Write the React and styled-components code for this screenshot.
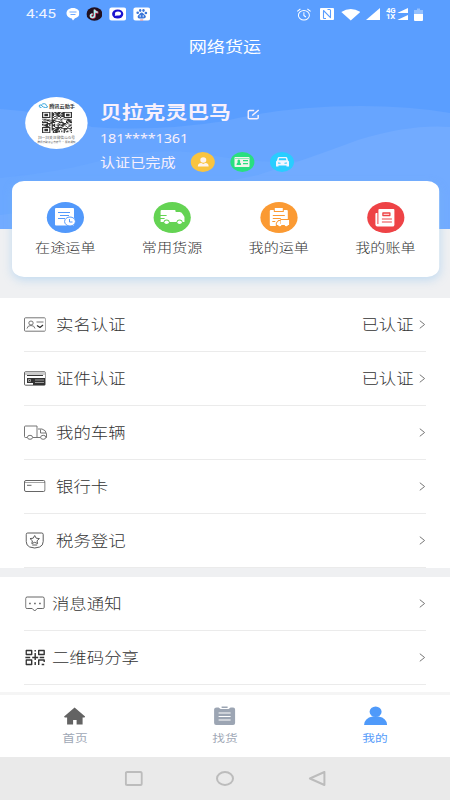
import React from 'react'
import styled, { createGlobalStyle } from 'styled-components'

const STRETCH = 1.2

const GlobalStyles = createGlobalStyle`
  * {
    box-sizing: border-box;
  }

  body {
    margin: 0;
    overflow: hidden;
    background: #eff0f2;
  }
`

const Screen = styled.div`
  display: flex;
  flex-direction: column;
  width: 375px;
  height: 800px;
  overflow: hidden;
  transform: scaleX(${STRETCH});
  transform-origin: 0 0;
  background: #eff0f2;
  color: #333;
  font-family: 'Noto Sans CJK SC', sans-serif;
  font-weight: 300;
  white-space: nowrap;
`

const Hero = styled.header`
  position: relative;
  flex: none;
  height: 229px;
  background: #5a9eff;
  color: #f8f0fb;
`

const Waves = styled.svg`
  position: absolute;
  inset: 0;
  width: 100%;
  height: 100%;
`

const HeroContent = styled.div`
  position: relative;
`

const StatusBar = styled.div`
  display: flex;
  align-items: center;
  justify-content: space-between;
  height: 28px;
  padding: 0 22.3px 0 21.7px;
  color: #fff;
`

const StatusGroup = styled.div`
  display: flex;
  align-items: center;
  gap: ${p => p.$gap}px;
`

const Clock = styled.span`
  width: 27.5px;
  font: 13px/20px Roboto, sans-serif;
  color: #eef4ff;
`

const Network = styled.span`
  margin-right: -3.3px;
  font: bold 6.5px/6.5px Roboto, sans-serif;
`

const Title = styled.h1`
  margin: 0;
  font-size: 15.1px;
  font-weight: 400;
  line-height: 34px;
  text-align: center;
  color: #fff;
`

const Profile = styled.section`
  display: flex;
  gap: 10px;
  padding: 35px 0 0 20.8px;
`

const Avatar = styled.div`
  display: flex;
  flex-direction: column;
  align-items: center;
  width: 52.5px;
  height: 52px;
  overflow: hidden;
  border-radius: 50%;
  background: #fff;
  color: #333;
`

const AvatarBrand = styled.div`
  display: flex;
  align-items: center;
  gap: 1px;
  height: 15px;
  padding-top: 2px;
  font-size: 4.3px;
  font-weight: 700;
  line-height: 6px;
`

const AvatarNote = styled.div`
  margin-top: ${p => p.$top}px;
  font-size: ${p => p.$size}px;
  font-weight: 400;
  line-height: 4px;
  color: #555;
`

const Details = styled.div`
  display: flex;
  flex-direction: column;
`

const Name = styled.div`
  display: flex;
  align-items: center;
  gap: 13.8px;
  height: 27px;
  font-size: 18.2px;
  font-weight: 700;

  svg {
    margin-top: 6px;
  }
`

const Phone = styled.div`
  font: 12px/29px 'Noto Sans', sans-serif;
  letter-spacing: -0.1px;
`

const Verified = styled.div`
  display: flex;
  align-items: center;
  height: 17px;
  font-size: 12.6px;
  font-weight: 400;
`

const Badges = styled.div`
  display: flex;
  gap: 13.1px;
  margin-left: 12.7px;
`

const Circle = styled.span`
  display: flex;
  align-items: center;
  justify-content: center;
  width: ${p => p.$size}px;
  height: ${p => p.$size}px;
  border-radius: 50%;
  background: ${p => p.$color};
`

const Card = styled.nav`
  position: relative;
  display: grid;
  flex: none;
  grid-template-columns: repeat(4, 1fr);
  height: 96px;
  margin: -48px 9.3px 21px 10px;
  border-radius: 10px;
  background: #fff;
  box-shadow: 0 3px 9px rgba(120, 185, 240, 0.38);
`

const Shortcut = styled.div`
  display: flex;
  flex-direction: column;
  align-items: center;
  padding-top: 21px;
  font-size: 12.6px;
  line-height: 28px;
`

const List = styled.section`
  flex: ${p => (p.$fill ? 1 : 'none')};
  margin-bottom: ${p => (p.$fill ? 0 : 8.5)}px;
  padding: 0 20px;
  background: #fff;
`

const Row = styled.div`
  display: flex;
  align-items: center;
  height: 54.1px;
  border-bottom: 1px solid #ebebeb;
  font-size: 14.5px;
`

const RowIcon = styled.span`
  display: flex;
  flex: none;
  width: ${p => p.$width}px;
  padding-left: ${p => p.$inset}px;
`

const RowLabel = styled.span`
  flex: 1;
  padding-bottom: 2px;
`

const RowValue = styled.span`
  margin-right: 4.5px;
  padding-bottom: 2px;
`

const TabBar = styled.nav`
  display: grid;
  flex: none;
  grid-template-columns: repeat(3, 1fr);
  height: 65px;
  background: #fff;
  border-top: 3px solid #f5f5f5;
`

const Tab = styled.div`
  display: flex;
  flex-direction: column;
  align-items: center;
  padding-top: 11px;
  color: ${p => (p.$active ? '#569bfa' : '#a0a8b6')};
  font-size: 10.6px;
  font-weight: 400;
  line-height: 24px;
`

const SystemBar = styled.div`
  display: flex;
  flex: none;
  align-items: center;
  justify-content: center;
  gap: 61.5px;
  height: 43px;
  background: #eaeaea;
`

// drawn in stretched units, so strokes keep one thickness
const Icon = ({ w, h, color = '#4a4a4a', filled, stroke = 1, children }) => (
  <svg
    width={w / STRETCH}
    height={h}
    viewBox={`0 0 ${w} ${h}`}
    preserveAspectRatio='none'
    fill={filled ? color : 'none'}
    stroke={filled ? 'none' : color}
    strokeWidth={stroke}
    strokeLinejoin='round'
    style={{ display: 'block', flex: 'none' }}
  >
    {children}
  </svg>
)

const qrCells = []
for (let y = 0; y < 25; y++) {
  for (let x = 0; x < 25; x++) {
    const cx = x > 17 ? 24 - x : x
    const cy = y > 17 ? 24 - y : y
    const corner = cx < 8 && cy < 8 && !(x > 17 && y > 17)
    const ring = Math.max(Math.abs(cx - 3), Math.abs(cy - 3))
    const on = corner ? ring < 2 || ring === 3 : (x * 7 + y * 13 + x * y * 5 + ((x * x) ^ (y * 3))) % 7 < 4
    if (on) qrCells.push(`M${x} ${y}h1v1h-1z`)
  }
}

const Chevron = () => (
  <Icon w={7} h={9} color='#777'>
    <path d='M1 .7l4.800 3.800L1 8.300' />
  </Icon>
)

const shortcuts = [
  {
    label: '在途运单',
    color: '#5299fb',
    icon: (
      <Icon w={22} h={19} color='#fff' filled>
        <path d='M2 0h17a1 1 0 0 1 1 1v16.500H2a1 1 0 0 1-1-1V1a1 1 0 0 1 1-1z' />
        <path d='M4 4.500h12M6 7.500h9M4 10.500h7' stroke='#5299fb' />
        <ellipse cx='16' cy='13.500' rx='5.400' ry='4.500' stroke='#5299fb' />
        <path d='M15.500 11v3h3' fill='none' stroke='#5299fb' />
      </Icon>
    )
  },
  {
    label: '常用货源',
    color: '#64d353',
    icon: (
      <Icon w={26} h={15} color='#fff' filled>
        <path d='M2 0h13q1 0 1 1v1h4q2 0 3 2l2 3v5h-2a3 2.500 0 0 0-6 0H10a3 2.500 0 0 0-6 0H1V9h4V8H1V6h6V5H1V1q0-1 1-1z' />
        <ellipse cx='7' cy='12.300' rx='2.200' ry='1.800' />
        <ellipse cx='20' cy='12.300' rx='2.200' ry='1.800' />
      </Icon>
    )
  },
  {
    label: '我的运单',
    color: '#fb9a33',
    icon: (
      <Icon w={21} h={20} color='#fff' filled>
        <path d='M2 2h3v2h10V2h3q1 0 1 1v15H2q-1 0-1-1V3q0-1 1-1z' />
        <path d='M6 0h8v3H6z' />
        <path d='M4 7.500h12M4 10.500h8M3.500 13.500h3' stroke='#fb9a33' />
        <path d='M7 18v-3l2.500-3h2V11H21v7.500z' fill='#fb9a33' />
        <path d='M12 12h8q.5 0 .5.500V17H8v-2l2-2h1.500v3h.5z' />
        <ellipse cx='11' cy='17' rx='1.600' ry='1.300' />
        <ellipse cx='17.500' cy='17' rx='1.600' ry='1.300' />
      </Icon>
    )
  },
  {
    label: '我的账单',
    color: '#ee4346',
    icon: (
      <Icon w={21} h={18} color='#fff' filled>
        <path d='M5 0h14q1 0 1 1v15q0 1.500-2 1.500H3q-2 0-2-2V5q0-1 1-1h1v11h1V1q0-1 1-1z' />
        <path d='M8.500 4h7v2.500h-7z' fill='none' stroke='#ee4346' strokeWidth='1.300' />
        <path d='M7.500 10h10M7.500 13h10' stroke='#ee4346' strokeWidth='1.200' />
      </Icon>
    )
  }
]

const account = [
  {
    label: '实名认证',
    value: '已认证',
    icon: (
      <Icon w={22} h={15} color='#666' stroke={0.9}>
        <rect x='.5' y='.8' width='21' height='13.400' rx='1' />
        <ellipse cx='7' cy='6' rx='2.200' ry='2' />
        <path d='M3 11.500q.5-3 4-3t4 3M12.500 5h7' />
        <path d='M13 8.500l3 2L19 8' stroke='#333' strokeWidth='1.200' />
      </Icon>
    )
  },
  {
    label: '证件认证',
    value: '已认证',
    icon: (
      <Icon w={22} h={15} stroke={0.9}>
        <rect x='.5' y='.8' width='21' height='13.400' rx='1' />
        <path d='M1 2h20v2H1z' fill='#ccc' stroke='none' />
        <path d='M3 4.500h16' stroke='#222' />
        <path d='M3 7h18v7H9v-2H3z' fill='#333' stroke='none' />
        <path d='M4.500 8.500h2v2h-2zM11 9h9M11 11.500h9' stroke='#bbb' strokeWidth='.8' />
      </Icon>
    )
  },
  {
    label: '我的车辆',
    icon: (
      <Icon w={24} h={15} color='#666' stroke={0.9}>
        <path d='M3 12.500H1.500q-1 0-1-1V2q0-1 1-1H13v11.500H9M14 4h4q4 1 4.500 5v3.500H22M16.500 12.500H13M16.500 4.500V8H22' />
        <ellipse cx='6' cy='12.300' rx='2.600' ry='2' />
        <ellipse cx='19.200' cy='12.300' rx='2.600' ry='2' />
      </Icon>
    )
  },
  {
    label: '银行卡',
    icon: (
      <Icon w={22} h={15} color='#555' stroke={0.9}>
        <rect x='.5' y='1.500' width='20.500' height='11' rx='1.500' />
        <path d='M1 3.500h20' opacity='.6' />
        <path d='M3 6.300h4.500' />
      </Icon>
    )
  },
  {
    label: '税务登记',
    inset: 1.4,
    icon: (
      <Icon w={19} h={17} stroke={0.9}>
        <path d='M2.500 1h14q1.500 0 1.500 1.500v7q0 4-3.500 5.500-5 2-10 0Q1 13.500 1 9.500v-7Q1 1 2.500 1z' />
        <path d='M9.500 3.500l1.500 2.700 3.200.4L11.800 8.800l.6 2.800-2.900-1.300-2.900 1.300.6-2.800-2.400-2.200 3.200-.4zM7 13h5' />
      </Icon>
    )
  }
]

const tools = [
  {
    label: '消息通知',
    icon: (
      <Icon w={20} h={16} color='#555' stroke={0.9}>
        <path d='M2 1h15.500q1.500 0 1.500 1.500v9q0 1-1.500 1H12L9.500 15 7 12.500H2q-1.500 0-1.500-1v-9Q.5 1 2 1z' />
        <path d='M4 7.500h1.500M9 7.500h1.500M14 7.500h1.500' strokeWidth='1.300' />
      </Icon>
    )
  },
  {
    label: '二维码分享',
    icon: (
      <Icon w={20} h={17} color='#333' stroke={1.4}>
        <path d='M1 1.500h5.500v4H1zM13.500 1.500H19v4h-5.500zM1 11h5.500v4.500H1zM10 1v1.500M10 4v7M7 8.500h6M14.500 8.500H19M0 8.500h5M10 13v3M13.500 16v-5H19v2M16.500 15.500H19' />
      </Icon>
    )
  }
]

const MenuRow = ({ item, width, inset = 0 }) => (
  <Row>
    <RowIcon $width={width} $inset={item.inset || inset}>{item.icon}</RowIcon>
    <RowLabel>{item.label}</RowLabel>
    {item.value && <RowValue>{item.value}</RowValue>}
    <Chevron />
  </Row>
)

const App = () => (
  <>
    <GlobalStyles />
    <Screen>
      <Hero>
        <Waves viewBox='0 0 450 229' preserveAspectRatio='none'>
          <path d='M0 109Q45 111 92 127Q155 132 225 121Q285 106 360 106Q410 106 450 113V229H0z' fill='#67a5ff' />
          <path d='M0 178Q55 173 100 161Q160 145 210 155Q260 164 300 161V229H0z' fill='#6ba8ff' />
          <path d='M0 229V215Q160 195 258 175Q310 158 358 140Q410 124 450 127V229z' fill='#72abff' />
        </Waves>
        <HeroContent>
          <StatusBar>
            <StatusGroup $gap={5.6}>
              <Clock>4:45</Clock>
              <Icon w={14} h={14} color='#fff' filled>
                <path d='M7 1C3 1 .5 3.300.5 6.200S3 11 5.500 11.300L7 13.500l2-2.300c2.700-.5 4.500-2.400 4.500-5C13.500 3.300 11 1 7 1z' />
                <path d='M3.500 5h7M4.500 7.500h5' stroke='#5a9eff' strokeWidth='.9' />
              </Icon>
              <Icon w={16} h={14} color='#21101f' filled>
                <ellipse cx='8' cy='7' rx='8' ry='6.700' />
                <path d='M8.500 2.800v6.200a2 1.700 0 1 1-2-1.700M8.500 3q.5 2.500 3.500 2.700' fill='none' stroke='#ef4c6c' strokeWidth='2' />
                <path d='M8 2.500v6.200a2 1.700 0 1 1-2-1.700M8 3q.5 2 3.300 2.300' fill='none' stroke='#aff5f3' strokeWidth='1.500' />
              </Icon>
              <Icon w={17} h={14} color='#fff' filled>
                <rect y='.5' width='17' height='13' rx='2.500' />
                <ellipse cx='8.500' cy='7' rx='5.600' ry='4.600' fill='#1b13cf' />
                <ellipse cx='8.800' cy='6.500' rx='3' ry='2' fill='#fff' />
                <path d='M5.500 9l1-2.500 2 1.500z' fill='#fff' />
              </Icon>
              <Icon w={17} h={14} color='#fff' filled>
                <rect y='.5' width='17' height='13' rx='2.500' />
                <g fill='#3b75d9'>
                  <ellipse cx='4.500' cy='5.800' rx='1.300' ry='1.300' />
                  <ellipse cx='7' cy='3.500' rx='1.200' ry='1.400' />
                  <ellipse cx='10.300' cy='3.500' rx='1.200' ry='1.400' />
                  <ellipse cx='12.700' cy='6' rx='1.300' ry='1.300' />
                  <path d='M8.500 5.500q1.300 0 2.300 1.800 3 2 1.200 3.700-1 .7-3.500.4-2.600.4-3.500-.4-1.600-1.500 1.200-3.700 1-1.800 2.300-1.800z' />
                </g>
                <path d='M7 8v2.200M10 8v2.200' stroke='#fff' strokeWidth='.8' />
                <path d='M7 13h3' stroke='#e88' />
              </Icon>
            </StatusGroup>
            <StatusGroup $gap={4.8}>
              <Icon w={15} h={13} color='#fff' stroke={1}>
                <ellipse cx='7.500' cy='7.200' rx='5.500' ry='4.800' />
                <path d='M7.500 4.300v3.200l2 1.500M.8 3.300L4 1M14.200 3.300L11 1' />
              </Icon>
              <Icon w={17} h={12} color='#fff' filled>
                <rect x='2' width='14' height='12' rx='1' />
                <path d='M5.500 10.500V2.500l7 7.200V2M9.500 1.500h3M5.500 10.500H8' fill='none' stroke='#5a9eff' strokeWidth='1.100' />
              </Icon>
              <Icon w={20} h={13} color='#fff' filled>
                <path d='M10 12.500L.5 4Q5 1 10 1t9.500 3z' />
              </Icon>
              <Icon w={14} h={12} color='#fff' filled>
                <path d='M14 0v12H0z' />
              </Icon>
              <Network>
                4G
                <br />
                1X
              </Network>
              <Icon w={11} h={12} color='#fff' filled>
                <path d='M11 0v5H0zM11 7v5H0z' />
              </Icon>
              <Icon w={9} h={13} color='#fff' filled>
                <path d='M3 .5h3V2h3v4H0V2h3z' opacity='.35' />
                <path d='M0 6h9v6q0 1-1 1H1q-1 0-1-1z' />
              </Icon>
            </StatusGroup>
          </StatusBar>
          <Title>网络货运</Title>
          <Profile>
            <Avatar>
              <AvatarBrand>
                <Icon w={10} h={5} color='#35a5dd'>
                  <path d='M3 4.500Q.5 4.500.6 3T3 2Q4 .5 6 .7t2 2q1.500.5 1 1.500-2 .8-4-.2T3 2' />
                </Icon>
                腾讯云助手
              </AvatarBrand>
              <svg width='25' height='21' viewBox='0 0 25 25' preserveAspectRatio='none'>
                <path d={qrCells.join('')} fill='#333' />
              </svg>
              <AvatarNote $top={3} $size={3.1}>扫一扫关注微信公众号</AvatarNote>
              <AvatarNote $top={0} $size={2.2}>腾讯云助手官方账号 · 服务通知</AvatarNote>
            </Avatar>
            <Details>
              <Name>
                贝拉克灵巴马
                <Icon w={13} h={12} color='#f8f0fb' stroke={1.5}>
                  <path d='M7 2.500H2.500Q1 2.500 1 3.500v6.300q0 1 1.500 1h7q1.500 0 1.500-1V7M5 7.500L11.500 2' />
                </Icon>
              </Name>
              <Phone>181****1361</Phone>
              <Verified>
                认证已完成
                <Badges>
                  <Circle $size={20} $color='#f9c440'>
                    <Icon w={13} h={10} color='#fdf3ee' filled>
                      <ellipse cx='6.500' cy='3' rx='3' ry='2.800' />
                      <path d='M1 9.500Q1 6 4.500 6L6.500 7l2-1Q12 6 12 9.500z' />
                    </Icon>
                  </Circle>
                  <Circle $size={20} $color='#29df80'>
                    <Icon w={16} h={10} color='#f3f5ec' filled>
                      <rect x='.5' width='15' height='10' rx='.8' />
                      <path d='M2.500 8q0-2 1.200-2.500Q3 2.500 4.800 2.500T6 5.500Q7.200 6 7.200 8zM9 3h5v1.200H9zM9 6h5v1.200H9zM1 1h14v.6H1z' fill='#29df80' />
                    </Icon>
                  </Circle>
                  <Circle $size={20} $color='#29cdff'>
                    <Icon w={13} h={10} color='#f3f5ff' filled>
                      <path d='M3 0h7q1 0 1.300 1l.7 2.500 1 1V9.500h-2.500V8.500h-8v1H0v-5l1-1L1.700 1Q2 0 3 0z' />
                      <path d='M3.200 1.300h6.600l.6 2H2.600zM2 5.500l2.500.3v1L2 6.500zM11 5.500l-2.500.3v1L11 6.500z' fill='#29cdff' />
                    </Icon>
                  </Circle>
                </Badges>
              </Verified>
            </Details>
          </Profile>
        </HeroContent>
      </Hero>

      <Card>
        {shortcuts.map(({ label, color, icon }) => (
          <Shortcut key={label}>
            <Circle $size={31} $color={color}>{icon}</Circle>
            {label}
          </Shortcut>
        ))}
      </Card>

      <List>
        {account.map(item => (
          <MenuRow key={item.label} item={item} width={26.7} />
        ))}
      </List>
      <List $fill>
        {tools.map(item => (
          <MenuRow key={item.label} item={item} width={23.3} inset={1} />
        ))}
      </List>

      <TabBar>
        <Tab>
          <Icon w={22} h={20} color='#636363' filled>
            <path d='M11 1.500L21.500 10.500q0 1-1 1H19v7h-6V14H9.500v4.500H3.500v-7H1.500q-1 0-1-1z' />
          </Icon>
          首页
        </Tab>
        <Tab>
          <Icon w={22} h={20} color='#9ca5b3' filled>
            <path d='M3 1.500h2L7 3h8l2-1.500h2.500q2 0 2 2v13.500q0 2-2 2H2.500q-2 0-2-2V3.500q0-2 2.500-2z' />
            <path d='M8 .5h6v1.500H8z' />
            <path d='M5 7h12M5 10.500h12M5 14h12' stroke='#fff' strokeWidth='1.200' />
          </Icon>
          找货
        </Tab>
        <Tab $active>
          <Icon w={24} h={20} color='#4f9afa' filled>
            <ellipse cx='12' cy='5.800' rx='6' ry='5.200' />
            <path d='M.5 19Q.8 12 9 10.500h6q8.200 1.500 8.500 8.500z' />
          </Icon>
          我的
        </Tab>
      </TabBar>
      <SystemBar>
        <Icon w={18} h={15} color='#bcbcbc' stroke={2}>
          <rect x='1' y='1' width='16' height='13' rx='1.500' />
        </Icon>
        <Icon w={18} h={15} color='#bcbcbc' stroke={2}>
          <ellipse cx='9' cy='7.500' rx='8' ry='6.500' />
        </Icon>
        <Icon w={18} h={15} color='#bcbcbc' stroke={2}>
          <path d='M16 1v13L1.500 7.500z' />
        </Icon>
      </SystemBar>
    </Screen>
  </>
)

export default App
